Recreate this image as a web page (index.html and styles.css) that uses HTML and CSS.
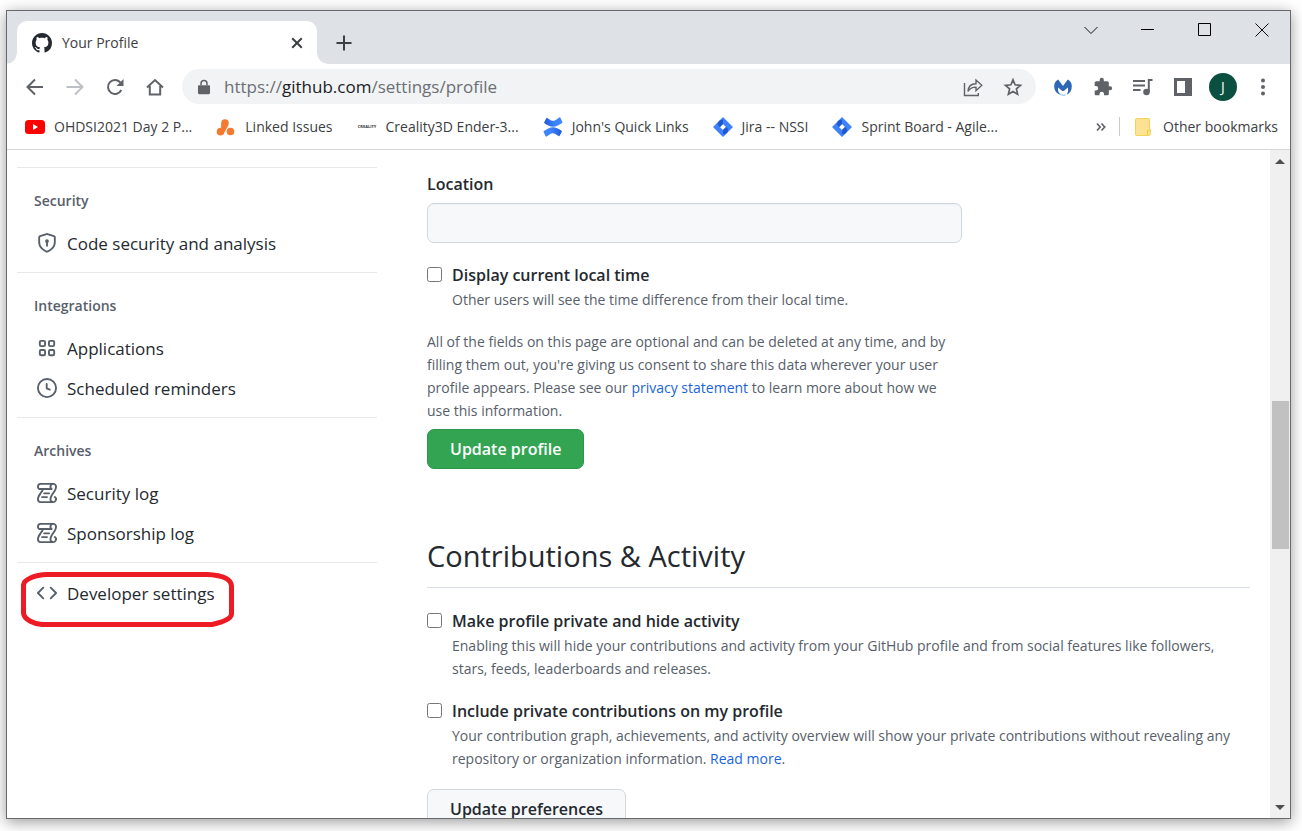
FILE: index.html
```html
<!DOCTYPE html>
<html lang="en">
<head>
<meta charset="utf-8">
<title>Your Profile</title>
<link rel="stylesheet" href="styles.css">
</head>
<body>
<div class="window">
  <header class="tabstrip">
    <div class="tab">
      <svg class="icon" viewBox="0 0 16 16" fill="#24292f" aria-hidden="true"><path d="M8 0C3.58 0 0 3.58 0 8c0 3.54 2.29 6.53 5.47 7.59.4.07.55-.17.55-.38 0-.19-.01-.82-.01-1.49-2.01.37-2.53-.49-2.69-.94-.09-.23-.48-.94-.82-1.13-.28-.15-.68-.52-.01-.53.63-.01 1.08.58 1.23.82.72 1.21 1.87.87 2.33.66.07-.52.28-.87.51-1.07-1.78-.2-3.64-.89-3.64-3.95 0-.87.31-1.59.82-2.15-.08-.2-.36-1.02.08-2.12 0 0 .67-.21 2.2.82.64-.18 1.32-.27 2-.27.68 0 1.36.09 2 .27 1.53-1.04 2.2-.82 2.2-.82.44 1.1.16 1.92.08 2.12.51.56.82 1.27.82 2.15 0 3.07-1.87 3.75-3.65 3.95.29.25.54.73.54 1.48 0 1.07-.01 1.93-.01 2.2 0 .21.15.46.55.38A8.013 8.013 0 0016 8c0-4.42-3.58-8-8-8z"/></svg>
      <span class="tab-title">Your Profile</span>
      <button class="tab-button" aria-label="Close tab"><svg class="icon" viewBox="0 0 20 20" fill="none" stroke="#3c4043" stroke-width="2"><path d="M5.2 5.2l9.6 9.6M14.800 5.200l-9.600 9.600"/></svg></button>
    </div>
    <button class="tab-button new-tab" aria-label="New tab"><svg class="icon" viewBox="0 0 20 20" fill="none" stroke="#3c4043" stroke-width="2"><path d="M10 2.500v15M2.500 10h15"/></svg></button>
    <div class="window-controls">
      <button aria-label="Search tabs"><svg class="icon" viewBox="0 0 20 20" fill="none" stroke="#111"><path d="M3.500 7l6.500 6.500L16.500 7"/></svg></button>
      <button aria-label="Minimize"><svg class="icon" viewBox="0 0 20 20" fill="none" stroke="#000"><path d="M3 9.500h13"/></svg></button>
      <button aria-label="Maximize"><svg class="icon" viewBox="0 0 20 20" fill="none" stroke="#000"><path d="M3.500 3.500h12v12h-12z"/></svg></button>
      <button aria-label="Close"><svg class="icon" viewBox="0 0 20 20" fill="none" stroke="#111"><path d="M3.500 3.500l13 13M16.500 3.500l-13 13"/></svg></button>
    </div>
  </header>

  <div class="toolbar">
    <button class="tool" aria-label="Back"><svg class="icon" viewBox="0 0 20 20" fill="none" stroke="#5f6368" stroke-width="2"><path d="M18 10H3M10 2.500L2.500 10l7.500 7.500"/></svg></button>
    <button class="tool" aria-label="Forward"><svg class="icon" viewBox="0 0 20 20" fill="none" stroke="#bdc1c6" stroke-width="2"><path d="M1.500 10H17M10 2.500l7.500 7.500-7.500 7.500"/></svg></button>
    <button class="tool" aria-label="Reload"><svg class="icon" viewBox="0 0 20 20" fill="none" stroke="#5f6368" stroke-width="2"><path d="M16.300 13A7 7 0 1 1 15.500 5.600"/><path fill="#5f6368" stroke="none" d="M18.500 2v7h-7z"/></svg></button>
    <button class="tool" aria-label="Home"><svg class="icon" viewBox="0 0 20 20" fill="none" stroke="#5f6368" stroke-width="2"><path d="M2 10.500L10 3l8 7.500M4.800 9v8.500h10.400V9"/></svg></button>
    <div class="omnibox">
      <svg class="lock" viewBox="0 0 20 20" aria-hidden="true"><path fill="#5f6368" d="M4.500 8h11a1.200 1.200 0 0 1 1.200 1.200v7.600a1.200 1.200 0 0 1-1.200 1.200h-11a1.200 1.200 0 0 1-1.200-1.200V9.200A1.200 1.200 0 0 1 4.500 8z"/><path d="M6.700 8V6a3.300 3.300 0 0 1 6.600 0v2" fill="none" stroke="#5f6368" stroke-width="1.700"/></svg>
      <div class="url" role="textbox" contenteditable="true" spellcheck="false" aria-label="Address">https://<span class="host">github.com</span>/settings/profile</div>
      <button class="tool" aria-label="Share this page"><svg class="icon" viewBox="0 0 20 20" fill="none" stroke="#5f6368" stroke-width="1.400"><path d="M1.500 6v12.500h13.800V16"/><path d="M5 14.500c.3-5.300 3-7.700 8-7.700V3l5.800 5.300-5.800 5.400v-3.600c-4 0-6.300 1.200-8 4.400z"/></svg></button>
      <button class="tool" aria-label="Bookmark this tab"><svg class="icon" viewBox="0 0 20 20" fill="none" stroke="#5f6368" stroke-width="1.700"><path d="M10 2.800l2.100 5 5.400.5-4.100 3.600 1.200 5.300-4.600-2.800-4.600 2.800 1.200-5.300-4.100-3.600 5.400-.5z"/></svg></button>
    </div>
    <button class="tool" aria-label="Malwarebytes"><svg class="icon" viewBox="0 0 20 20"><path fill="#2d67b5" d="M7.500 17.800C3.700 16.300 1.200 13.400 1.200 9.400 1.200 6.300 2.600 3.800 5.200 2.600L10 9l4.800-6.400c2.600 1.200 4 3.700 4 6.800 0 4-2 6.900-5.300 8.400 1.700-2.200 2-4.600 1.300-7.200L10.800 14H9.200L5.200 10.600c-.6 2.800.2 5.200 2.300 7.200z"/><path fill="none" stroke="#77b6e8" d="M6 16c1.500 2 4 2.700 6.500 2"/></svg></button>
    <button class="tool" aria-label="Extensions"><svg class="icon" viewBox="0 0 24 24"><path fill="#5f6368" d="M20.500 11H19V7c0-1.100-.9-2-2-2h-4V3.500a2.500 2.500 0 0 0-5 0V5H4c-1.100 0-2 .9-2 2v3.800h1.500a2.700 2.700 0 0 1 0 5.400H2V20c0 1.100.9 2 2 2h3.800v-1.500a2.700 2.700 0 0 1 5.400 0V22H17c1.100 0 2-.9 2-2v-4h1.500a2.500 2.500 0 0 0 0-5z"/></svg></button>
    <button class="tool" aria-label="Media controls"><svg class="icon" viewBox="0 0 20 20" fill="none" stroke="#5f6368" stroke-width="2"><path d="M0 4h12M0 8.500h12M0 13h7.500"/><path d="M19.500 3h-3.700v12"/><circle cx="13.500" cy="15" r="2.300" fill="#5f6368"/></svg></button>
    <button class="tool" aria-label="Side panel"><svg class="icon" viewBox="0 0 20 20"><path fill="#5f6368" fill-rule="evenodd" d="M1 1h18v18H1zM4 4v12h8V4z"/></svg></button>
    <button class="tool" aria-label="Account: J"><span class="avatar">J</span></button>
    <button class="tool" aria-label="Menu"><svg class="icon" viewBox="0 0 20 20" fill="#5f6368"><circle cx="10" cy="3.500" r="2"/><circle cx="10" cy="10" r="2"/><circle cx="10" cy="16.500" r="2"/></svg></button>
  </div>

  <nav class="bookmarks" aria-label="Bookmarks">
    <a class="bookmark" href="#"><svg class="icon" viewBox="0 0 20 20" aria-hidden="true"><rect y="3" width="20" height="14" rx="3.500" fill="#f00"/><path d="M8 7l5 3-5 3z" fill="#fff"/></svg>OHDSI2021 Day 2 P...</a>
    <a class="bookmark" href="#"><svg class="icon" viewBox="0 0 20 20" aria-hidden="true"><g fill="#f47a30"><circle cx="9" cy="6" r="3.800"/><circle cx="4.500" cy="14.800" r="3.800"/><circle cx="14.500" cy="14.500" r="3.800"/><path d="M5.300 6.500L5 10.500 1.500 12l6 5 5-9z"/></g></svg>Linked Issues</a>
    <a class="bookmark" href="#"><svg class="icon" viewBox="0 0 20 20" aria-hidden="true"><text class="creality" x="10" y="11" text-anchor="middle">CREALITY</text></svg>Creality3D Ender-3...</a>
    <a class="bookmark" href="#"><svg class="icon" viewBox="0 0 20 20" aria-hidden="true"><defs><linearGradient id="cf"><stop offset="0" stop-color="#2058d4"/><stop offset=".6" stop-color="#3d85ff"/></linearGradient></defs><path id="wave" fill="url(#cf)" d="M1.200 5.200L3.300 1.200c.2-.5.600-.6 1-.3C8 3.600 10 4.600 12.300 3.200L16.300.5c.5-.3.900-.1 1.100.3l2 4.200c.2.500.1.800-.3 1.100L14.800 8.600C9.800 11 6 9.400 1.500 6.200c-.4-.3-.5-.6-.3-1z"/><use href="#wave" transform="rotate(180 10 10)"/></svg>John's Quick Links</a>
    <a class="bookmark" href="#"><svg class="icon" viewBox="0 0 20 20" aria-hidden="true"><path id="gem" fill="#3d82fb" fill-rule="evenodd" d="M10 0l9.500 9.400a.9.900 0 0 1 0 1.200L10 20 .5 10.600a.9.900 0 0 1 0-1.200zM10 7l-3 3 3 3 3-3z"/><path fill="#2158d0" d="M10 7L7 10 4.800 7.800c0-3 1.500-5 5.200-5zM10 13l3-3 2.200 2.200c0 3-1.500 5-5.200 5z"/></svg>Jira -- NSSI</a>
    <a class="bookmark" href="#"><svg class="icon" viewBox="0 0 20 20" aria-hidden="true"><use href="#gem"/><path fill="#2158d0" d="M10 7L7 10 4.800 7.800c0-3 1.500-5 5.200-5zM10 13l3-3 2.200 2.200c0 3-1.500 5-5.200 5z"/></svg>Sprint Board - Agile...</a>
    <button class="more" aria-label="More bookmarks"><svg class="more-icon" viewBox="0 0 10 10" fill="none" stroke="#5f6368" stroke-width="1.700"><path d="M1 1.500L4.200 5 1 8.500M5.500 1.500L8.700 5 5.500 8.500"/></svg></button>
    <a class="bookmark other" href="#"><svg class="folder" viewBox="0 0 16 18" aria-hidden="true"><path fill="#fde293" stroke="#f3d357" d="M1.500.5h12a1 1 0 0 1 1 1v10h1v4a2 2 0 0 1-2 2h-12a1 1 0 0 1-1-1v-15a1 1 0 0 1 1-1z"/><path fill="none" stroke="#eec83b" d="M12.500 17v-4.500h2"/></svg>Other bookmarks</a>
  </nav>

  <div class="viewport">
    <div class="page">
      <nav class="sidebar" aria-label="Settings">
        <section class="group">
          <h3>Security</h3>
          <a class="item" href="#"><svg class="icon" viewBox="0 0 16 16" fill="#57606a" aria-hidden="true"><path d="m8.533.133 5.250 1.680A1.750 1.750 0 0 1 15 3.480V7c0 1.566-.32 3.182-1.303 4.682-.983 1.498-2.585 2.813-5.032 3.855a1.697 1.697 0 0 1-1.330 0c-2.447-1.042-4.049-2.357-5.032-3.855C1.320 10.182 1 8.566 1 7V3.480a1.755 1.755 0 0 1 1.217-1.667l5.250-1.680a1.748 1.748 0 0 1 1.066 0Zm-.61 1.429.001.001-5.250 1.680a.251.251 0 0 0-.174.237V7c0 1.360.275 2.666 1.057 3.859.784 1.194 2.121 2.342 4.366 3.298a.196.196 0 0 0 .154 0c2.245-.957 3.582-2.103 4.366-3.297C13.225 9.666 13.500 8.358 13.500 7V3.480a.25.25 0 0 0-.174-.238l-5.250-1.680a.25.25 0 0 0-.153 0ZM9.500 6.500c0 .536-.286 1.032-.75 1.300v2.450a.75.75 0 0 1-1.500 0V7.800A1.500 1.500 0 1 1 9.500 6.500Z"/></svg>Code security and analysis</a>
        </section>
        <section class="group">
          <h3>Integrations</h3>
          <a class="item" href="#"><svg class="icon" viewBox="0 0 16 16" fill="none" stroke="#57606a" stroke-width="1.500" aria-hidden="true"><rect x="2.250" y="2.250" width="4.200" height="4.200" rx="1"/><rect x="9.550" y="2.250" width="4.200" height="4.200" rx="1"/><rect x="2.250" y="9.550" width="4.200" height="4.200" rx="1"/><rect x="9.550" y="9.550" width="4.200" height="4.200" rx="1"/></svg>Applications</a>
          <a class="item" href="#"><svg class="icon" viewBox="0 0 16 16" fill="#57606a" aria-hidden="true"><path d="M8 0a8 8 0 1 1 0 16A8 8 0 0 1 8 0ZM1.500 8a6.500 6.500 0 1 0 13 0 6.500 6.500 0 0 0-13 0Zm7-3.250v2.992l2.028.812a.75.75 0 0 1-.557 1.392l-2.500-1A.751.751 0 0 1 7 8.250v-3.500a.75.75 0 0 1 1.500 0Z"/></svg>Scheduled reminders</a>
        </section>
        <section class="group">
          <h3>Archives</h3>
          <a class="item" href="#"><svg class="icon" viewBox="0 0 16 16" fill="#57606a" aria-hidden="true"><path id="log" d="M5 8.250a.75.75 0 0 1 .75-.75h4a.75.75 0 0 1 0 1.500h-4A.75.75 0 0 1 5 8.250ZM4 10.500A.75.75 0 0 0 4 12h4a.75.75 0 0 0 0-1.500H4ZM13-.005c1.654 0 3 1.328 3 3 0 .982-.338 1.933-.783 2.818-.443.879-1.028 1.758-1.582 2.588l-.011.017c-.568.853-1.104 1.659-1.501 2.446-.398.789-.623 1.494-.623 2.136a1.500 1.500 0 1 0 2.333-1.248.75.75 0 0 1 .834-1.246A3 3 0 0 1 13 16H3a3 3 0 0 1-3-3c0-1.582.891-3.135 1.777-4.506.209-.322.418-.637.623-.946.473-.709.923-1.386 1.287-2.048H2.510c-.576 0-1.381-.133-1.907-.783A2.680 2.680 0 0 1 0 2.995a3 3 0 0 1 3-3Zm0 1.500a1.500 1.500 0 0 0-1.500 1.500c0 .476.223.834.667 1.132A.75.75 0 0 1 11.750 5.500H5.368c-.467 1.003-1.141 2.015-1.773 2.963-.192.289-.381.571-.558.845C2.130 10.711 1.500 11.916 1.500 13A1.500 1.500 0 0 0 3 14.500h7.401A2.989 2.989 0 0 1 10 13c0-.979.338-1.928.784-2.812.441-.874 1.023-1.748 1.575-2.576l.017-.026c.568-.853 1.103-1.658 1.501-2.448.398-.79.623-1.497.623-2.143 0-.838-.669-1.500-1.500-1.500Zm-10 0a1.500 1.500 0 0 0-1.500 1.500c0 .321.1.569.27.778.097.12.325.227.74.227h7.674A2.737 2.737 0 0 1 10 2.995c0-.546.146-1.059.401-1.500Z"/></svg>Security log</a>
          <a class="item" href="#"><svg class="icon" viewBox="0 0 16 16" fill="#57606a" aria-hidden="true"><use href="#log"/></svg>Sponsorship log</a>
        </section>
        <section class="group last">
          <a class="item" href="#"><svg class="icon" viewBox="0 0 16 16" fill="none" stroke="#57606a" stroke-width="1.500" stroke-linecap="round" stroke-linejoin="round" aria-hidden="true"><path d="M5 3.750L.75 8 5 12.250M11 3.750L15.250 8 11 12.250"/></svg>Developer settings</a>
          <svg class="highlight" viewBox="0 0 213 55" aria-hidden="true"><path fill="none" stroke="#ed1c24" stroke-width="5" d="M26 2.500H186C198 3 210 6 210.500 14V42C210 48 198 51 191 52.500H21C14 52 3 48 2.500 41V13C3 7 14 3 26 2.500z"/></svg>
        </section>
      </nav>

      <main class="content">
        <form class="narrow">
          <label class="field-label" for="location">Location</label>
          <input class="text-input" id="location" type="text">
          <div class="option">
            <input type="checkbox" id="local-time">
            <div>
              <label for="local-time">Display current local time</label>
              <p class="note">Other users will see the time difference from their local time.</p>
            </div>
          </div>
          <p class="note consent">All of the fields on this page are optional and can be deleted at any time, and by filling them out, you're giving us consent to share this data wherever your user profile appears. Please see our <a href="#">privacy statement</a> to learn more about how we use this information.</p>
          <button class="btn primary" type="button">Update profile</button>
        </form>
        <h2>Contributions &amp; Activity</h2>
        <form>
          <div class="option">
            <input type="checkbox" id="private">
            <div>
              <label for="private">Make profile private and hide activity</label>
              <p class="note">Enabling this will hide your contributions and activity from your GitHub profile and from social features like followers, stars, feeds, leaderboards and releases.</p>
            </div>
          </div>
          <div class="option">
            <input type="checkbox" id="include">
            <div>
              <label for="include">Include private contributions on my profile</label>
              <p class="note">Your contribution graph, achievements, and activity overview will show your private contributions without revealing any repository or organization information. <a href="#">Read more</a>.</p>
            </div>
          </div>
          <button class="btn" type="button">Update preferences</button>
        </form>
      </main>
    </div>
    <div class="scrollbar" aria-hidden="true">
      <svg class="arrow" viewBox="0 0 20 20"><path fill="#505050" d="M5 14l5-5 5 5z"/></svg>
      <div class="track"><div class="thumb"></div></div>
      <svg class="arrow" viewBox="0 0 20 20"><path fill="#505050" d="M5 7l5 5 5-5z"/></svg>
    </div>
  </div>
</div>
</body>
</html>
```

FILE: styles.css
```css
* {
  box-sizing: border-box;
}

body {
  margin: 0;
  height: 100vh;
  padding: 10px 11px 12px 6px;
  overflow: hidden;
  background: #fff;
  color: #24292f;
  font-family: "Open Sans", "Noto Sans", sans-serif;
  font-size: 14px;
}

button {
  padding: 0;
  border: 0;
  background: none;
  font: inherit;
  color: inherit;
}

a {
  color: #1a64da;
  text-decoration: none;
}

.icon {
  display: block;
  flex: none;
  width: 20px;
  height: 20px;
}

.window {
  display: flex;
  flex-direction: column;
  height: 100%;
  border: 1px solid #666a6d;
  background: #fff;
  box-shadow: 0 3px 14px rgba(0, 0, 0, 0.4);
}

/* Tab strip */
.tabstrip {
  display: flex;
  flex: none;
  height: 53px;
  padding: 10px 0 0 10px;
  background: #dee1e6;
}

.tab {
  position: relative;
  display: flex;
  align-items: center;
  gap: 10px;
  width: 300px;
  padding: 0 10px 0 15px;
  border-radius: 10px 10px 0 0;
  background: #fff;
  color: #3c4043;
}

.tab::before,
.tab::after {
  content: "";
  position: absolute;
  bottom: 0;
  width: 10px;
  height: 10px;
}

.tab::before {
  right: 100%;
  background: radial-gradient(circle at 0 0, transparent 9px, #fff 10px);
}

.tab::after {
  left: 100%;
  background: radial-gradient(circle at 100% 0, transparent 9px, #fff 10px);
}

.tab-title {
  flex: 1;
}

.new-tab {
  margin-left: 17px;
}

.window-controls {
  display: flex;
  height: 38px;
  margin: -10px 0 0 auto;
}

.window-controls button {
  display: grid;
  place-items: center;
  width: 57px;
}

/* Toolbar */
.toolbar {
  display: flex;
  flex: none;
  align-items: center;
  height: 45px;
  padding: 0 7px 0 8px;
}

.tool {
  display: grid;
  flex: none;
  place-items: center;
  width: 40px;
  height: 35px;
}

.omnibox {
  display: flex;
  flex: 1;
  align-items: center;
  height: 35px;
  margin: 0 7px;
  padding: 0 3px 0 13px;
  border-radius: 18px;
  background: #f1f3f4;
}

.lock {
  width: 18px;
  height: 18px;
  margin-right: 11px;
}

.url {
  flex: 1;
  color: #6b6f74;
  font-size: 17px;
  white-space: nowrap;
}

.host {
  color: #202124;
}

.avatar {
  display: grid;
  place-items: center;
  width: 28px;
  height: 28px;
  border-radius: 50%;
  background: #0b4f40;
  color: #fff;
  font-size: 14px;
}

/* Bookmarks */
.bookmarks {
  display: flex;
  flex: none;
  align-items: center;
  gap: 24px;
  height: 41px;
  padding: 0 12px 5px 18px;
  border-bottom: 1px solid #d5d7da;
  white-space: nowrap;
}

.bookmark {
  display: flex;
  align-items: center;
  gap: 9px;
  color: #3c4043;
}

.creality {
  fill: #333;
  font-size: 4px;
  font-weight: 700;
}

.more {
  margin: 0 -11px 0 auto;
}

.more-icon {
  display: block;
  width: 10px;
  height: 10px;
}

.other {
  gap: 12px;
  padding-left: 15px;
  border-left: 1px solid #c8cbcf;
}

.folder {
  width: 16px;
  height: 18px;
}

/* Page area */
.viewport {
  display: flex;
  flex: 1;
  min-height: 0;
}

.page {
  display: flex;
  flex: 1;
  gap: 50px;
  min-width: 0;
  padding: 17px 20px 0 10px;
  overflow: hidden;
}

.sidebar {
  flex: none;
  width: 360px;
}

.group {
  position: relative;
  padding: 21px 17px 9px;
  border-top: 1px solid #e7eaed;
}

.group h3 {
  margin: 0 0 10px;
  color: #57606a;
  font-size: 14px;
  font-weight: 600;
  line-height: 24px;
}

.item {
  display: flex;
  align-items: center;
  gap: 10px;
  height: 40px;
  padding-left: 3px;
  color: #24292f;
  font-size: 17px;
}

.last {
  padding-top: 10px;
}

.highlight {
  position: absolute;
  top: 9px;
  left: 4px;
  width: 213px;
  height: 55px;
}

.content {
  flex: 1;
  min-width: 0;
}

.narrow {
  max-width: 535px;
}

.field-label {
  display: block;
  padding-top: 4px;
  margin-bottom: 6px;
  font-size: 16px;
  font-weight: 600;
  line-height: 26px;
}

.text-input {
  display: block;
  width: 100%;
  height: 40px;
  margin-bottom: 20px;
  padding: 0 14px;
  border: 1px solid #d0d7de;
  border-radius: 7px;
  background: #f6f8fa;
  box-shadow: inset 0 1px 0 rgba(208, 215, 222, 0.2);
  font: inherit;
}

.option {
  display: flex;
  gap: 10px;
  margin-bottom: 19px;
}

.option input {
  flex: none;
  width: 15px;
  height: 15px;
  margin: 4px 0 0;
}

.option label {
  display: block;
  font-size: 16px;
  font-weight: 600;
  line-height: 25px;
}

.note {
  margin: 0;
  color: #57606a;
  font-size: 14px;
  line-height: 23px;
}

.consent {
  margin-bottom: 7px;
}

.btn {
  height: 40px;
  padding: 0 22px;
  border: 1px solid #d3d8dd;
  border-radius: 7px;
  background: #f6f8fa;
  font-size: 16px;
  font-weight: 600;
}

.primary {
  border-color: #2c974b;
  background: #32a452;
  color: #fff;
}

h2 {
  margin: 62px 0 21px;
  padding-bottom: 7px;
  border-bottom: 1px solid #d8dee4;
  font-size: 29px;
  font-weight: 400;
  line-height: 49px;
}

/* Scrollbar */
.scrollbar {
  display: flex;
  flex: none;
  flex-direction: column;
  width: 20px;
  background: #f0f0f0;
}

.arrow {
  width: 20px;
  height: 20px;
}

.track {
  flex: 1;
  padding: 0 1px 0 2px;
}

.thumb {
  height: 148px;
  margin-top: 231px;
  background: #c1c1c1;
}
```
